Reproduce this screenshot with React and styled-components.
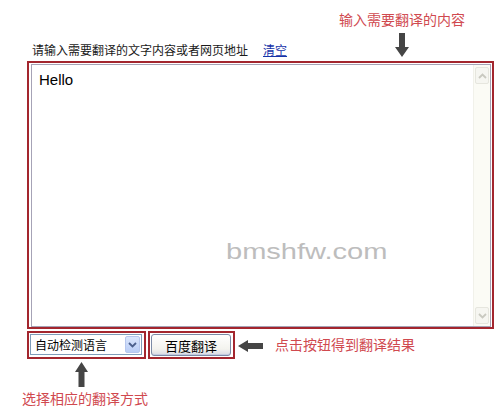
import React from "react";
import styled, { createGlobalStyle } from "styled-components";

const GlobalStyle = createGlobalStyle`
  html, body {
    margin: 0;
    padding: 0;
    background: #fff;
  }
  body {
    font-family: "Noto Sans CJK SC", "Liberation Sans", sans-serif;
  }
`;

const cjk = `"Noto Sans CJK SC", "Liberation Sans", sans-serif`;

function Arrow({ dir, w, h }) {
  // thick block arrow, drawn pointing down then rotated by direction
  const rot = { down: 0, up: 180, left: 90 }[dir];
  const vw = dir === "left" ? h : w;
  const vh = dir === "left" ? w : h;
  return (
    <svg width={w} height={h} viewBox={`0 0 ${w} ${h}`}>
      <g
        transform={`translate(${w / 2} ${h / 2}) rotate(${rot}) translate(${-vw / 2} ${-vh / 2})`}
      >
        <path
          d={`M${vw / 2 - 3} 0 H${vw / 2 + 3} V${vh - 10} H${vw} L${vw / 2} ${vh} L0 ${vh - 10} H${vw / 2 - 3} Z`}
          fill="#454545"
        />
      </g>
    </svg>
  );
}

function Chevron({ up, color = "#c9c9c0" }) {
  return (
    <svg width="9" height="6" viewBox="0 0 9 6">
      <path
        d={up ? "M1 5 L4.5 1.5 L8 5" : "M1 1 L4.5 4.5 L8 1"}
        fill="none"
        stroke={color}
        strokeWidth="1.8"
      />
    </svg>
  );
}

export default function App() {
  return (
    <>
      <GlobalStyle />
      <Page>
        <Header>
          <Label>
            请输入需要翻译的文字内容或者网页地址
            <ClearLink href="#">清空</ClearLink>
          </Label>
          <Note>
            <Hint>输入需要翻译的内容</Hint>
            <ArrowBox $h={24} $mt="6px">
              <Arrow dir="down" w={14} h={24} />
            </ArrowBox>
          </Note>
        </Header>

        <Frame>
          <Field>
            <Input readOnly value="Hello" />
            <Scrollbar>
              <ScrollButton>
                <Chevron up />
              </ScrollButton>
              <Track />
              <ScrollButton>
                <Chevron />
              </ScrollButton>
            </Scrollbar>
            <Watermark>bmshfw.com</Watermark>
          </Field>
        </Frame>

        <Footer>
          <LangColumn>
            <SmallFrame $pad="1px 2px 2px 1px" $indent="5px">
              <Select>
                <span>自动检测语言</span>
                <DropButton>
                  <Chevron color="#4b5f8c" />
                </DropButton>
              </Select>
            </SmallFrame>
            <ArrowBox $h={25} $mt="3px" $ml="53px">
              <Arrow dir="up" w={13} h={25} />
            </ArrowBox>
            <Hint $mt="3px">选择相应的翻译方式</Hint>
          </LangColumn>

          <SmallFrame $pad="1px 2px 1px 1px">
            <Button>百度翻译</Button>
          </SmallFrame>
          <ArrowBox $h={12} $mt="9px" $ml="3px">
            <Arrow dir="left" w={25} h={12} />
          </ArrowBox>
          <Hint $mt="5px" $ml="12px">
            点击按钮得到翻译结果
          </Hint>
        </Footer>
      </Page>
    </>
  );
}

const Page = styled.div`
  width: 500px;
  height: 412px;
  overflow: hidden;
  background: #fff;
`;

const Header = styled.div`
  display: flex;
  align-items: flex-end;
  height: 61px;
  box-sizing: border-box;
  padding: 11px 35px 0 32px;
`;

const Label = styled.div`
  font-family: ${cjk};
  font-size: 12px;
  line-height: 14px;
  color: #1a1a1a;
  margin-bottom: 4px;
  white-space: nowrap;
`;

const ClearLink = styled.a`
  margin-left: 15px;
  color: #1533a8;
  text-decoration: underline;
`;

const Note = styled.div`
  margin-left: auto;
  display: flex;
  flex-direction: column;
  align-items: center;
  align-self: stretch;
`;

const Hint = styled.div`
  margin: ${(p) => p.$mt || 0} 0 0 ${(p) => p.$ml || 0};
  font-family: ${cjk};
  font-size: 14px;
  line-height: 16px;
  color: #d0494f;
  white-space: nowrap;
`;

const ArrowBox = styled.div`
  display: flex;
  height: ${(p) => p.$h}px;
  margin: ${(p) => p.$mt || 0} 0 0 ${(p) => p.$ml || 0};
`;

const Frame = styled.div`
  margin-left: 27px;
  width: 467px;
  height: 268px;
  box-sizing: border-box;
  border: 2px solid #a3262e;
  padding: 1px 1px 0 2px;
`;

const Field = styled.div`
  position: relative;
  display: flex;
  height: 100%;
  box-sizing: border-box;
  border: 1px solid #a6a3b6;
  background: #fff;
`;

const Input = styled.textarea`
  flex: 1;
  border: none;
  outline: none;
  resize: none;
  overflow: hidden;
  margin: 0;
  padding: 6px 7px;
  font-family: "Liberation Sans", Arial, sans-serif;
  font-size: 15px;
  line-height: 17px;
  color: #000;
  background: transparent;
`;

const Scrollbar = styled.div`
  width: 16px;
  display: flex;
  flex-direction: column;
  background: #fbfbf5;
  border-left: 1px solid #f1f1ea;
`;

const ScrollButton = styled.div`
  height: 15px;
  margin: 2px 1px;
  display: flex;
  align-items: center;
  justify-content: center;
  border: 1px solid #e6e6de;
  border-radius: 2px;
  background: #f6f6f1;
`;

const Track = styled.div`
  flex: 1;
`;

const Watermark = styled.div`
  position: absolute;
  left: 194px;
  top: 174px;
  font-family: "Liberation Sans", Arial, sans-serif;
  font-size: 22px;
  line-height: 26px;
  color: #bdbdbd;
  transform: scaleX(1.32);
  transform-origin: left center;
  pointer-events: none;
`;

const Footer = styled.div`
  display: flex;
  align-items: flex-start;
  margin-top: 2px;
  padding-left: 22px;
`;

const LangColumn = styled.div`
  width: 126px;
  display: flex;
  flex-direction: column;
  align-items: flex-start;
`;

const SmallFrame = styled.div`
  display: flex;
  margin-left: ${(p) => p.$indent || 0};
  border: 2px solid #a3262e;
  padding: ${(p) => p.$pad};
`;

const Select = styled.div`
  width: 112px;
  height: 21px;
  box-sizing: border-box;
  border: 1px solid #7f9db9;
  display: flex;
  align-items: center;
  justify-content: space-between;
  padding-left: 4px;
  font-family: ${cjk};
  font-size: 12px;
  color: #000;
  background: #fff;
`;

const DropButton = styled.div`
  width: 15px;
  height: 17px;
  margin-right: 1px;
  box-sizing: border-box;
  border: 1px solid #b6c7ee;
  border-radius: 2px;
  background: linear-gradient(#dbe6fc, #b9cdf6);
  display: flex;
  align-items: center;
  justify-content: center;
`;

const Button = styled.div`
  width: 80px;
  height: 22px;
  box-sizing: border-box;
  border: 1px solid #7c8ba6;
  border-radius: 3px;
  background: linear-gradient(#ffffff, #f3f3ee 70%, #d9dbe4);
  box-shadow: inset 0 -1px 0 #c3cbe0;
  display: flex;
  align-items: center;
  justify-content: center;
  font-family: ${cjk};
  font-size: 13px;
  color: #000;
`;
